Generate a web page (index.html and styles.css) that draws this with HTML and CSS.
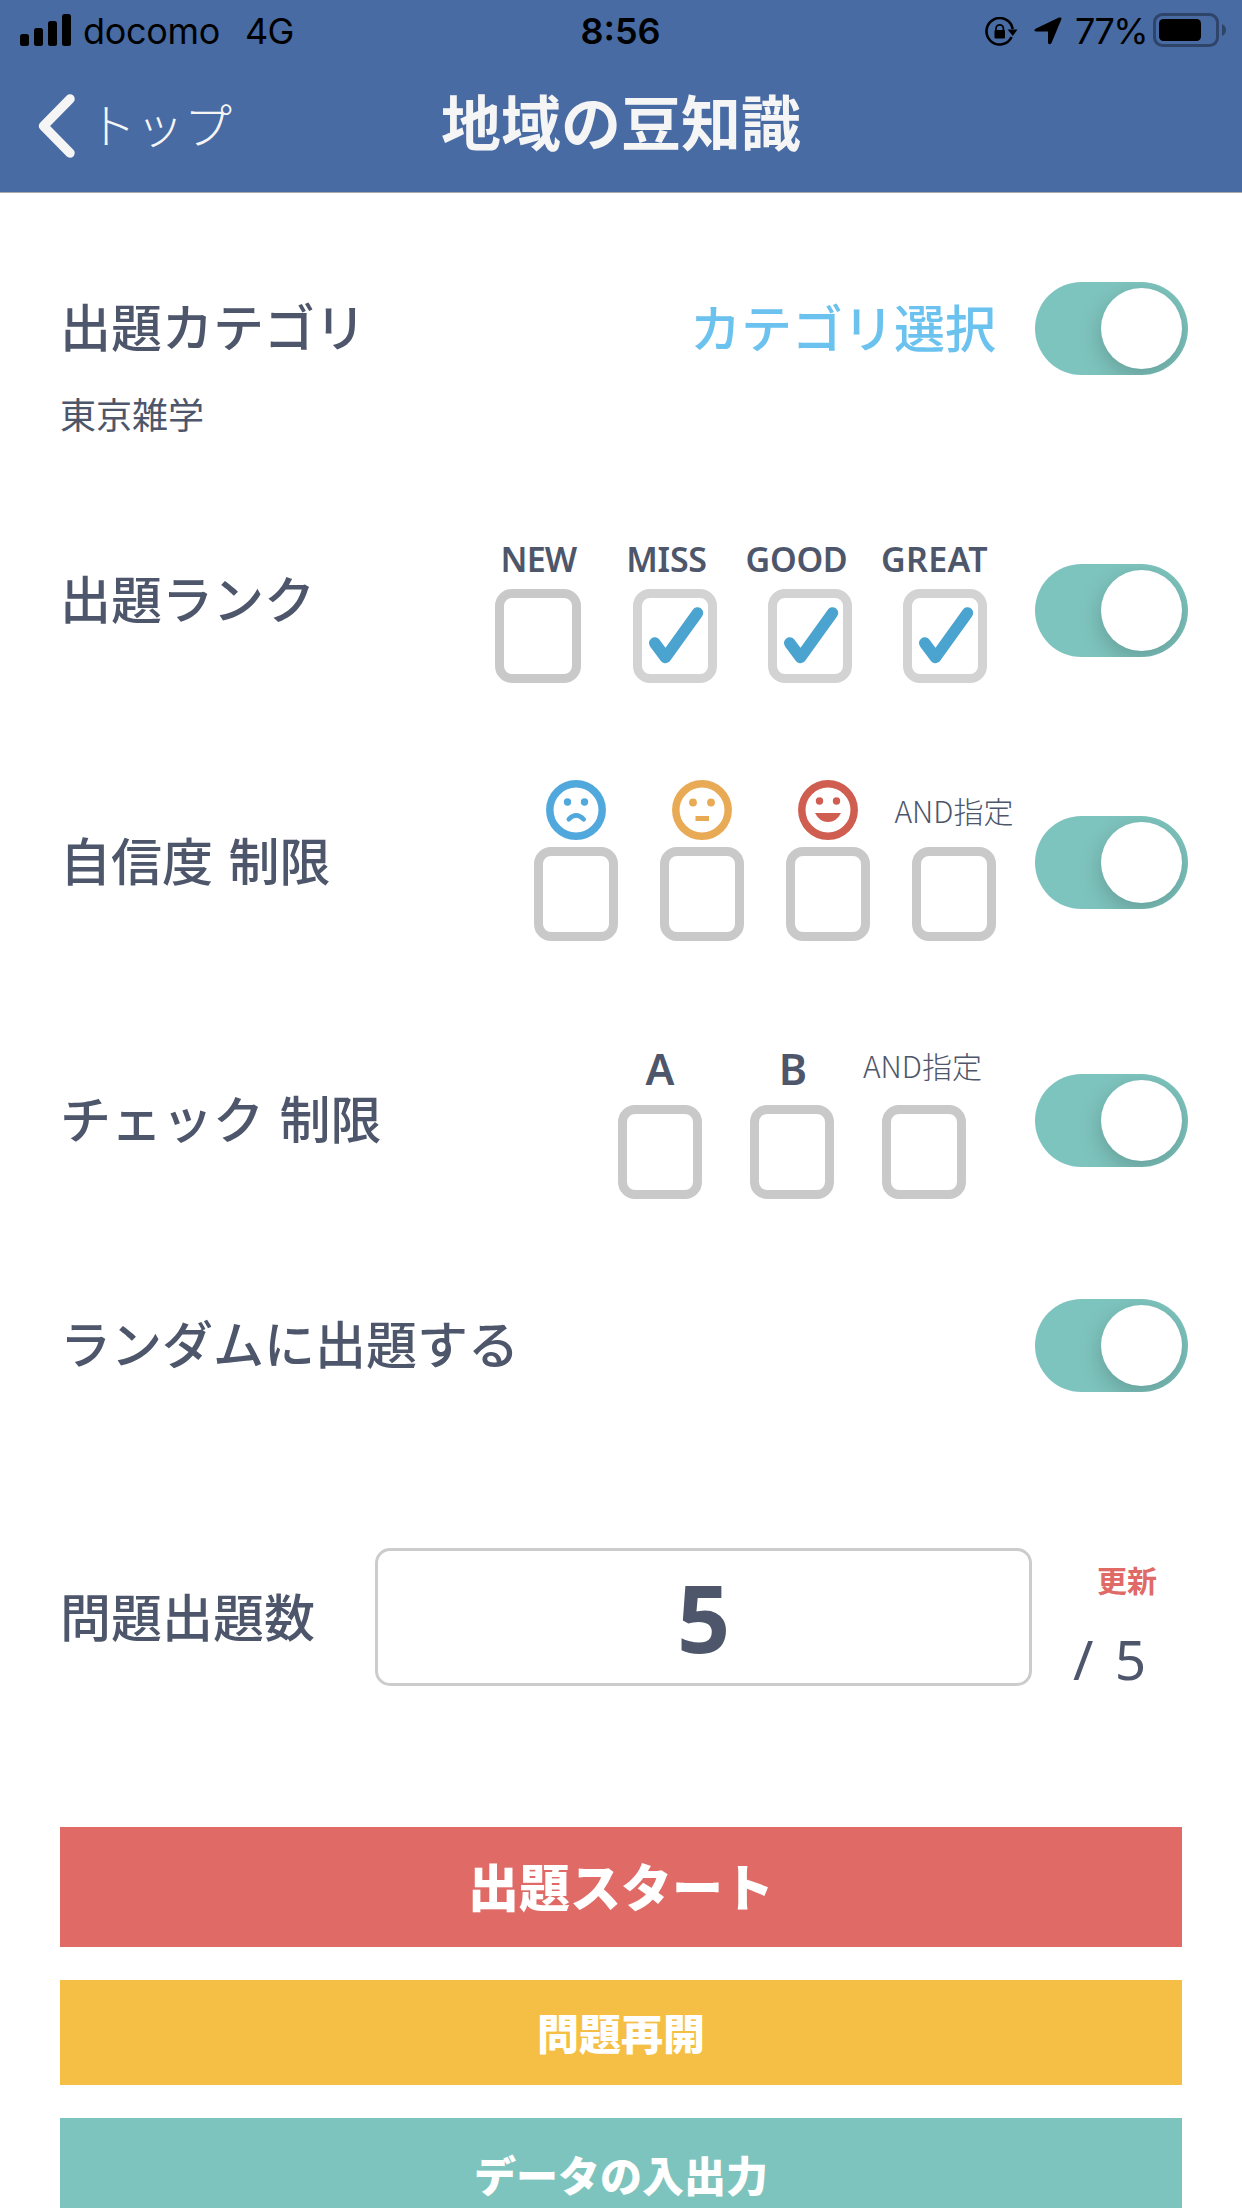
FILE: index.html
```
<!DOCTYPE html>
<html lang="ja">
<head>
<meta charset="utf-8">
<title>地域の豆知識</title>
<link rel="stylesheet" href="styles.css">
</head>
<body>
<svg class="defs" width="0" height="0" aria-hidden="true">
  <symbol id="tick" viewBox="0 0 66 76"><path d="M12.700 45L23.500 59.500L55.500 15" fill="none" stroke="#4ba3cf" stroke-width="11.500" stroke-linecap="round" stroke-linejoin="round"/></symbol>
</svg>
<div class="screen">
  <header class="header">
    <div class="status">
      <div class="status-left">
        <svg class="signal" width="52" height="32" viewBox="0 0 52 32"><rect x="0" y="20" width="9" height="12" rx="2.500"/><rect x="14" y="14" width="9" height="18" rx="2.500"/><rect x="28" y="7" width="9" height="25" rx="2.500"/><rect x="42" y="0" width="9" height="32" rx="2.500"/></svg>
        <span class="carrier">docomo</span>
        <span class="network">4G</span>
      </div>
      <span class="time">8:56</span>
      <div class="status-right">
        <svg class="lock" width="34" height="30" viewBox="0 0 34 30"><path d="M26.600 20A13.200 13.200 0 1 1 27.700 12" fill="none" stroke="#000" stroke-width="2.600"/><path d="M22.500 12.500h10l-4.700 6.500z"/><path d="M11 14v-2.500a3.700 3.700 0 0 1 7.400 0V14" fill="none" stroke="#000" stroke-width="1.700"/><rect x="9.500" y="13" width="10.500" height="8.500" rx="1"/></svg>
        <svg class="arrow" width="28" height="28" viewBox="0 0 28 28"><path d="M2 11.500L25 .600Q28.300-.300 27.200 2.800L17.500 26Q15.500 28.500 14 26V14.500H2Q-1.300 13.500 2 11.500z"/></svg>
        <span class="percent">77%</span>
        <svg class="battery" width="74" height="34" viewBox="0 0 74 34"><rect x="1.500" y="1.500" width="63" height="31" rx="8" fill="none" stroke="#2e4468" stroke-width="3"/><rect x="6" y="6" width="42" height="22" rx="4.500"/><path d="M69 11q4 2 4 6t-4 6z" fill="#2e4468"/></svg>
      </div>
    </div>
    <nav class="nav">
      <a class="back"><svg width="38" height="64" viewBox="0 0 38 64"><path d="M32 5L5.500 32L32 59" fill="none" stroke="#f5f5f5" stroke-width="9.500" stroke-linecap="round" stroke-linejoin="round"/></svg><span>トップ</span></a>
      <h1 class="title">地域の豆知識</h1>
    </nav>
  </header>

  <main class="main">
    <section class="row row-category">
      <h2 class="label">出題カテゴリ</h2>
      <a class="choose">カテゴリ選択</a>
      <span class="toggle"><i class="knob"></i></span>
    </section>
    <p class="note">東京雑学</p>

    <section class="row row-rank">
      <h2 class="label">出題ランク</h2>
      <div class="options">
        <div class="option"><span class="name">NEW</span><span class="box wide"></span></div>
        <div class="option"><span class="name">MISS</span><span class="box checked"><svg width="66" height="76"><use href="#tick"/></svg></span></div>
        <div class="option"><span class="name">GOOD</span><span class="box checked"><svg width="66" height="76"><use href="#tick"/></svg></span></div>
        <div class="option"><span class="name">GREAT</span><span class="box checked"><svg width="66" height="76"><use href="#tick"/></svg></span></div>
      </div>
      <span class="toggle"><i class="knob"></i></span>
    </section>

    <section class="row row-confidence">
      <h2 class="label">自信度 制限</h2>
      <div class="options">
        <div class="option"><svg class="face" width="60" height="60" viewBox="0 0 60 60"><circle cx="30" cy="30" r="26.200" fill="none" stroke="#50a8dc" stroke-width="7.500"/><g fill="#50a8dc"><circle cx="21.500" cy="22" r="3.700"/><circle cx="38.500" cy="22" r="3.700"/></g><path d="M22.800 39.300Q30 31.500 37.700 39.300" fill="none" stroke="#50a8dc" stroke-width="4.600" stroke-linecap="round"/></svg><span class="box"></span></div>
        <div class="option"><svg class="face" width="60" height="60" viewBox="0 0 60 60"><circle cx="30" cy="30" r="26.200" fill="none" stroke="#e8aa55" stroke-width="7.500"/><g fill="#e8aa55"><circle cx="21" cy="22.500" r="3.900"/><circle cx="39" cy="22.500" r="3.900"/><rect x="23.500" y="36" width="13.500" height="5"/></g></svg><span class="box"></span></div>
        <div class="option"><svg class="face" width="60" height="60" viewBox="0 0 60 60"><circle cx="30" cy="30" r="26.200" fill="none" stroke="#d05e50" stroke-width="7.500"/><g fill="#d05e50"><circle cx="21.500" cy="21" r="3.700"/><circle cx="38.500" cy="21" r="3.700"/><path d="M17 33H43Q38.500 42 30 42T17 33z"/></g></svg><span class="box"></span></div>
        <div class="option"><span class="and">AND指定</span><span class="box"></span></div>
      </div>
      <span class="toggle"><i class="knob"></i></span>
    </section>

    <section class="row row-check">
      <h2 class="label">チェック 制限</h2>
      <div class="options">
        <div class="option"><span class="letter">A</span><span class="box"></span></div>
        <div class="option"><span class="letter">B</span><span class="box"></span></div>
        <div class="option"><span class="and">AND指定</span><span class="box"></span></div>
      </div>
      <span class="toggle"><i class="knob"></i></span>
    </section>

    <section class="row row-random">
      <h2 class="label">ランダムに出題する</h2>
      <span class="toggle"><i class="knob"></i></span>
    </section>

    <section class="row row-count">
      <h2 class="label">問題出題数</h2>
      <div class="field">5</div>
      <div class="total"><a class="refresh">更新</a><span class="max">/ 5</span></div>
    </section>

    <div class="buttons">
      <a class="button start">出題スタート</a>
      <a class="button resume">問題再開</a>
      <a class="button data">データの入出力</a>
    </div>
  </main>
</div>
</body>
</html>
```
FILE: styles.css
```
* { box-sizing: border-box; }
body { margin: 0; background: #fff; }
h1, h2, p { margin: 0; }
.defs { display: block; height: 0; }

.screen {
  width: 1242px;
  height: 2208px;
  overflow: hidden;
  color: #4d566a;
  font-family: "Noto Sans CJK JP", sans-serif;
  white-space: nowrap;
}

/* header */
.header { height: 193px; background: #486ba3; border-bottom: 1px solid #a9a9ad; color: #f5f5f5; }
.status {
  display: grid;
  grid-template-columns: 1fr auto 1fr;
  height: 60px;
  padding: 0 16px 0 20px;
  color: #000;
  font: 400 36px/62px Inter, sans-serif;
}
.status-left, .status-right { display: flex; align-items: flex-start; }
.status-right { justify-content: flex-end; margin-right: -1px; }
.signal { margin-top: 14px; }
.carrier { margin-left: 11px; letter-spacing: -.3px; }
.network { margin-left: 25px; letter-spacing: -.8px; }
.time { margin-left: -5px; font-weight: 600; }
.lock { margin: 17px 15px 0 0; }
.arrow { margin: 17px 13px 0 0; }
.percent { letter-spacing: -1.6px; }
.battery { margin: 13px 0 0 6px; }

.nav { display: grid; grid-template-columns: 440px 362px 1fr; align-items: center; height: 132px; }
.back { display: flex; align-items: center; padding-left: 38px; font-size: 48px; font-weight: 300; line-height: 64px; }
.back span { height: 64px; margin-left: 12px; line-height: 59px; }
.title { font-size: 60px; font-weight: 700; text-align: center; line-height: 80px; padding-bottom: 13px; }

/* setting rows */
.main { padding: 89px 54px 0 60px; }
.row { display: flex; align-items: flex-start; }
.label { flex: 1; font-size: 51px; font-weight: 500; line-height: 87px; word-spacing: 4px; }
.choose { margin-right: 39px; color: #6bc2ef; font-size: 51px; font-weight: 500; line-height: 88px; }
.note { height: 60px; margin-top: 10px; font-size: 36px; line-height: 56px; }

.toggle {
  display: flex;
  justify-content: flex-end;
  width: 153px;
  height: 93px;
  padding: 6px;
  border-radius: 47px;
  background: #7ec4be;
  overflow: hidden;
}
.knob { width: 81px; height: 81px; border-radius: 50%; background: #fff; box-shadow: 0 8px 24px rgba(0, 0, 0, .2); }

.options { display: flex; }
.option { display: flex; flex-direction: column; align-items: center; }
.name { height: 48px; font: 600 34px/37px "Noto Sans", sans-serif; letter-spacing: -.3px; }
.letter { height: 60px; font: 600 43px/47px "Noto Sans", sans-serif; }
.and { font-size: 30px; font-weight: 200; }
.box { width: 84px; height: 94px; border: 9px solid #c9c9c9; border-radius: 17px; }
.box.wide { width: 86px; }
.box.checked { border-color: #d3d3d3; }
.box svg { display: block; }

.row-rank { height: 142px; margin-top: 96px; }
.row-rank .label { margin-top: 13px; }
.row-rank .options { margin-right: 23px; }
.row-rank .option { width: 135px; }
.row-rank .option:first-child { width: 139px; }
.row-rank .option:first-child .name { margin-left: 2px; letter-spacing: -.8px; }
.row-rank .option:nth-child(2) .name { margin-right: 16px; }
.row-rank .option:nth-child(3) .name { margin-right: 26px; }
.row-rank .option:nth-child(4) .name { margin-right: 20px; letter-spacing: .3px; }
.row-rank .toggle { margin-top: 23px; }

.row-confidence { height: 161px; margin-top: 97px; }
.row-confidence .label { margin-top: 36px; }
.row-confidence .options { margin-right: 18px; }
.row-confidence .option { width: 126px; }
.row-confidence .toggle { margin-top: 36px; }
.row-confidence .and { height: 67px; line-height: 61px; }
.face { margin-bottom: 7px; }

.row-check { height: 154px; margin-top: 104px; }
.row-check .label { margin-top: 29px; }
.row-check .options { margin-right: 45px; }
.row-check .option { width: 132px; }
.row-check .option:nth-child(2) .letter { margin-left: 2px; }
.row-check .toggle { margin-top: 29px; }
.row-check .and { height: 60px; margin-right: 3px; line-height: 41px; }

.row-random { margin-top: 100px; }

.row-count { height: 138px; margin-top: 156px; }
.row-count .label { flex: 0 0 315px; line-height: 134px; }
.field {
  width: 657px;
  height: 138px;
  border: 3px solid #ccc;
  border-radius: 15px;
  font: 700 93px/132px "Noto Sans", sans-serif;
  text-align: center;
}
.total { display: flex; flex-direction: column; flex: 1; }
.refresh { margin-left: 65px; color: #e06a66; font-size: 30px; font-weight: 700; line-height: 62px; }
.max { margin-left: 41px; font: 400 55px/97px "Noto Sans", sans-serif; word-spacing: 7px; }

/* actions */
.buttons { display: flex; flex-direction: column; gap: 33px; width: 1122px; margin-top: 141px; }
.button { color: #fff; font-weight: 900; text-align: center; font-size: 42px; }
.start { height: 120px; background: #e06a66; font-size: 51px; line-height: 117px; }
.resume { height: 105px; background: #f5bf45; line-height: 103px; }
.data { height: 120px; background: #7ec4be; line-height: 112px; }
```
